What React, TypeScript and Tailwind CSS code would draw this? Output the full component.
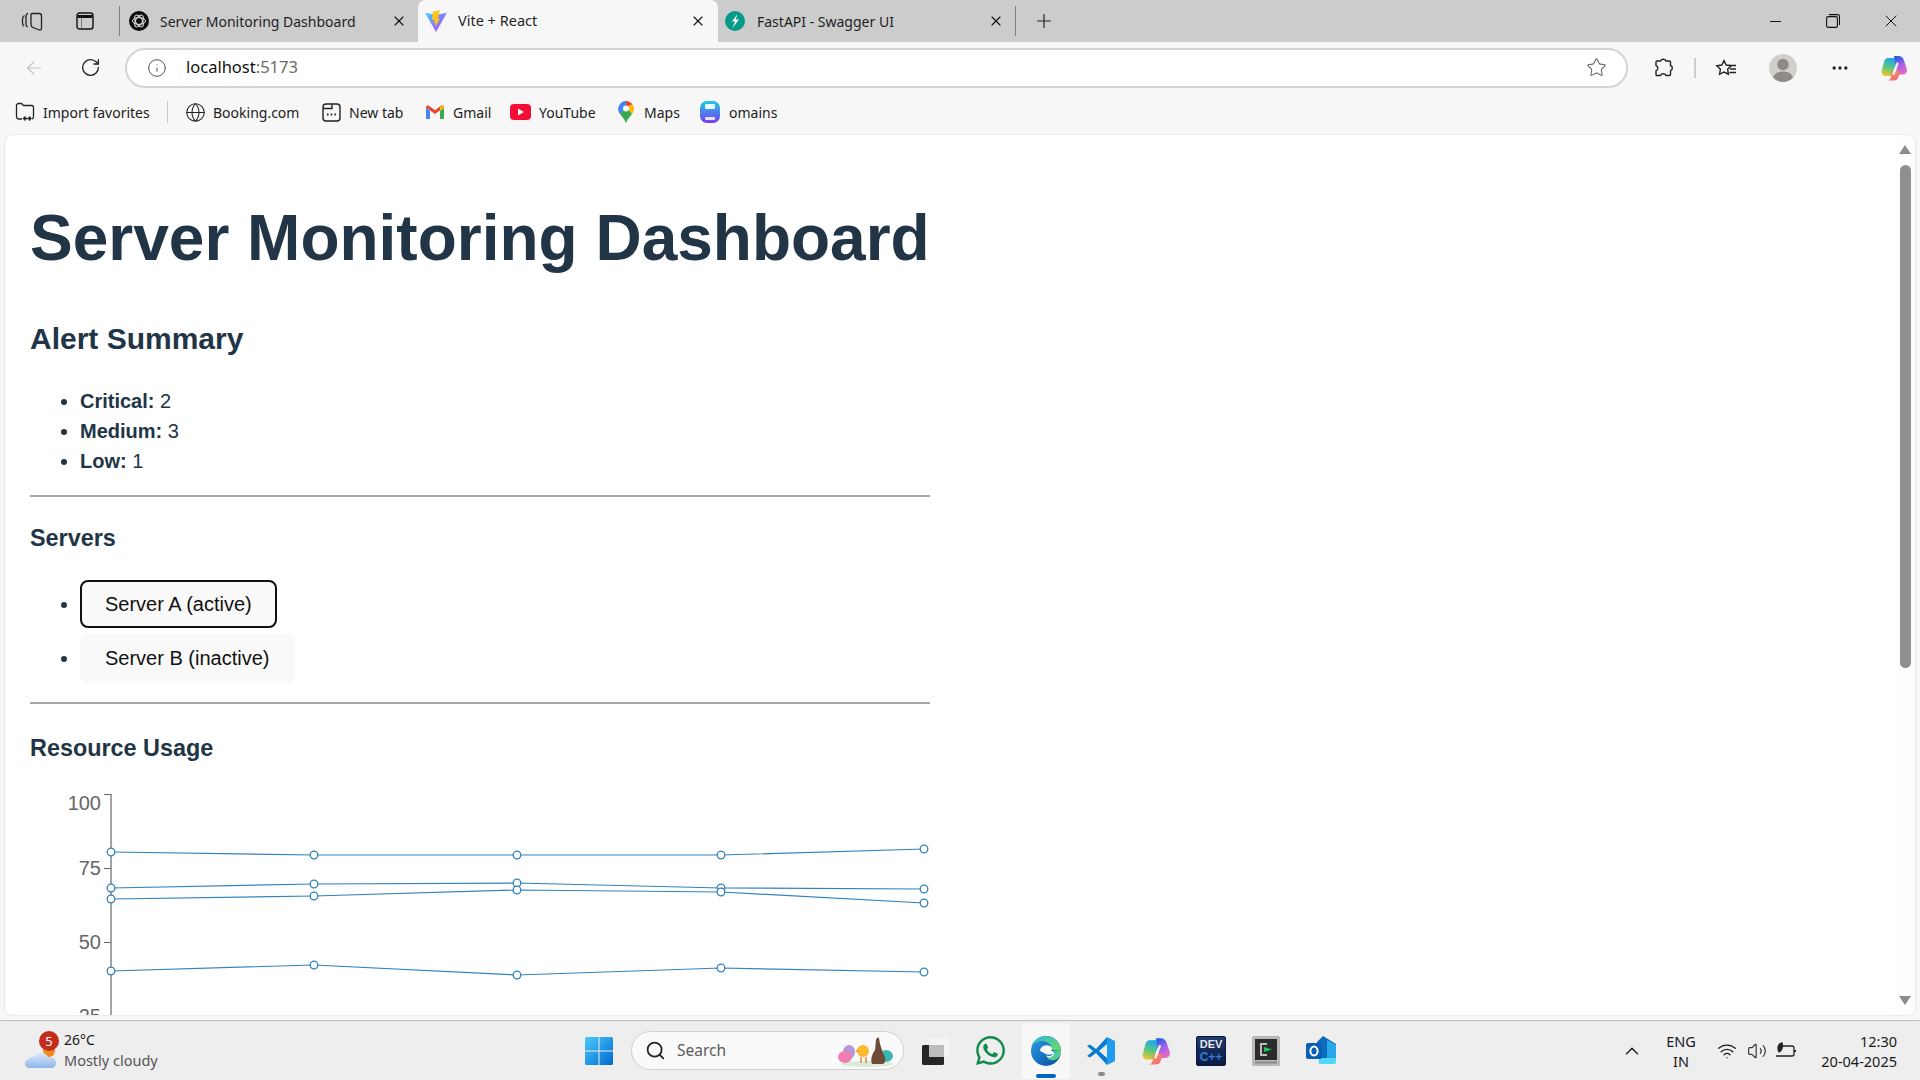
import React from 'react';
import { ArrowLeft, RotateCw, Info, Star, X, Plus, Minus, Search, ChevronUp, Globe, MoreHorizontal, Wifi, Volume2 } from 'lucide-react';
import { FaWhatsapp } from 'react-icons/fa';

const ui = "font-['Noto_Sans','Open_Sans',sans-serif]";

const xs = [111, 314, 517, 721, 924];
const series = [
  [852, 855, 855, 855, 849],
  [888, 884, 883, 888, 889],
  [899, 896, 890, 892, 903],
  [971, 965, 975, 968, 972],
];

function ResourceChart() {
  return (
    <svg width="900" height="300" className="mt-[18px] block shrink-0">
      <g transform="translate(-30,-780)" fontFamily="Liberation Sans" fontSize="20" fill="#666">
        <path d="M104 794.500H111V1100M104 868.500H111M104 942.500H111M104 1015.500H111" fill="none" stroke="#666" strokeWidth="1.2" />
        <text x="101" y="810" textAnchor="end">100</text>
        <text x="101" y="875" textAnchor="end">75</text>
        <text x="101" y="949" textAnchor="end">50</text>
        <text x="101" y="1023" textAnchor="end">25</text>
        {series.map((ys, i) => (
          <g key={i}>
            <polyline points={ys.map((y, j) => `${xs[j]},${y}`).join(' ')} fill="none" stroke="#3182bd" strokeWidth="1.2" />
            {ys.map((y, j) => (
              <circle key={j} cx={xs[j]} cy={y} r="3.800" fill="#fff" stroke="#3182bd" strokeWidth="1.300" />
            ))}
          </g>
        ))}
      </g>
    </svg>
  );
}

function ChatGptIcon() {
  return (
    <svg width="20" height="20" viewBox="0 0 20 20" className="shrink-0">
      <circle cx="10" cy="10" r="10" fill="#0d0d0d" />
      <g fill="none" stroke="#e8e8e8" strokeWidth="1">
        <ellipse cx="10" cy="10" rx="6.500" ry="3.400" />
        <ellipse cx="10" cy="10" rx="6.500" ry="3.400" transform="rotate(60 10 10)" />
        <ellipse cx="10" cy="10" rx="6.500" ry="3.400" transform="rotate(120 10 10)" />
      </g>
    </svg>
  );
}

function ViteIcon() {
  return (
    <svg width="24" height="24" viewBox="0 0 22 22" className="shrink-0">
      <defs>
        <linearGradient id="vitePurple" x1="0" y1="0" x2="1" y2="1">
          <stop offset="0" stopColor="#41d1ff" />
          <stop offset="1" stopColor="#bd34fe" />
        </linearGradient>
      </defs>
      <path d="M1 3.500 11 5.300l10-1.800L11 21z" fill="url(#vitePurple)" />
      <path d="M14.500 1 8 2.500 7.500 10l2.200-.4-.6 3.400 1.600-.4-.5 4 4.600-7.600-2.200.4z" fill="#ffc517" />
    </svg>
  );
}

function FastApiIcon() {
  return (
    <svg width="20" height="20" viewBox="0 0 20 20" className="shrink-0">
      <circle cx="10" cy="10" r="10" fill="#079a88" />
      <path d="M12.500 3 7 10.500h3.200L7.500 17l6.500-8.500h-3.300z" fill="#fff" />
    </svg>
  );
}

function TabClose({ className }: { className: string }) {
  return <X className={`w-[16px] h-[16px] text-[#111] ml-auto shrink-0 ${className}`} strokeWidth={1.7} />;
}

function TabBar() {
  return (
    <div className="h-[42px] bg-[#cccccc] flex items-center shrink-0">
      <div className="w-[64px] flex justify-end shrink-0 pr-[21px]">
        <svg width="22" height="22" viewBox="0 0 22 22" fill="none" stroke="#222" strokeWidth="1.300">
          <path d="M3.500 5.500C2 6.500 1.500 7.500 1.500 9v4c0 1.500.5 2.500 1.500 3.200" />
          <path d="M7 3C5.500 4 5 5 5 6.500V14c0 1.500.5 2.500 1.500 3.300" />
          <path d="M11 3.500h7c1.500 0 2.500 1 2.500 2.500v12.500c0 1-1 1.800-2 1.500l-6.500-2.500c-1.200-.5-2-1.500-2-3V5c0-1 .5-1.500 1-1.500z" />
        </svg>
      </div>
      <div className="w-[42px] shrink-0 flex justify-center">
        <svg width="18" height="18" viewBox="0 0 18 18" fill="none" stroke="#111" strokeWidth="1.400">
          <rect x="1" y="1" width="16" height="16" rx="2.500" />
          <path d="M1.500 4.500h15" strokeWidth="3" />
          <path d="M5.500 6v10.500" strokeWidth="0.8" stroke="#666" />
        </svg>
      </div>
      <div className="w-px h-[30px] bg-[#808080] ml-[13px] shrink-0" />
      <div className="w-[298px] h-[42px] flex items-center shrink-0">
        <div className="w-[9px] shrink-0" />
        <ChatGptIcon />
        <span className="ml-[11px] text-[14px] text-[#1f1f1f] whitespace-nowrap">Server Monitoring Dashboard</span>
        <TabClose className="mr-[11px]" />
      </div>
      <div className="w-[300px] h-[42px] flex items-center shrink-0 bg-[#f7f7f7] rounded-t-lg">
        <div className="w-[6px] shrink-0" />
        <ViteIcon />
        <span className="ml-[10px] text-[14.500px] text-[#1f1f1f] whitespace-nowrap">Vite + React</span>
        <TabClose className="mr-[12px]" />
      </div>
      <div className="w-[297px] h-[42px] flex items-center shrink-0">
        <div className="w-[7px] shrink-0" />
        <FastApiIcon />
        <span className="ml-[12px] text-[14px] text-[#1f1f1f] whitespace-nowrap">FastAPI - Swagger UI</span>
        <TabClose className="mr-[11px]" />
      </div>
      <div className="w-px h-[30px] bg-[#808080] shrink-0" />
      <Plus className="w-[22px] h-[22px] ml-[17px] text-[#222]" strokeWidth={1.300} />
      <div className="ml-auto flex items-center">
        <div className="w-[58px] flex justify-center"><Minus className="w-[17px] h-[17px] text-[#111]" strokeWidth={1.500} /></div>
        <div className="w-[58px] flex justify-center">
          <svg width="14" height="14" viewBox="0 0 14 14" fill="none" stroke="#111" strokeWidth="1.100">
            <rect x="0.600" y="2.600" width="10.800" height="10.800" rx="1.500" />
            <path d="M3 .6h8.500a2 2 0 0 1 2 2V11" />
          </svg>
        </div>
        <div className="w-[58px] flex justify-center"><X className="w-[20px] h-[20px] text-[#111]" strokeWidth={1.200} /></div>
      </div>
    </div>
  );
}

function AvatarIcon() {
  return (
    <svg width="28" height="28" viewBox="0 0 28 28">
      <circle cx="14" cy="14" r="14" fill="#d1cfcb" />
      <circle cx="14" cy="10.500" r="5.800" fill="#8e8b87" />
      <path d="M4 23.500c1.500-4 5-6 10-6s8.500 2 10 6A14 14 0 0 1 14 28a14 14 0 0 1-10-4.500z" fill="#8e8b87" />
    </svg>
  );
}

function CopilotIcon({ size = 28, id }: { size?: number; id: string }) {
  return (
    <svg width={size} height={size} viewBox="0 0 28 28">
      <defs>
        <linearGradient id={`${id}A`} x1="0.6" y1="0" x2="0.3" y2="1">
          <stop offset="0" stopColor="#1aa4f0" />
          <stop offset="0.55" stopColor="#5cc87c" />
          <stop offset="1" stopColor="#f5c52e" />
        </linearGradient>
        <linearGradient id={`${id}B`} x1="0.3" y1="0" x2="0.7" y2="1">
          <stop offset="0" stopColor="#1f5fe0" />
          <stop offset="0.5" stopColor="#a860e8" />
          <stop offset="1" stopColor="#ec6cc0" />
        </linearGradient>
        <linearGradient id={`${id}C`} x1="0" y1="0" x2="1" y2="1">
          <stop offset="0" stopColor="#f7a13c" />
          <stop offset="1" stopColor="#ee5f8f" />
        </linearGradient>
      </defs>
      <path d="M8 4h10l-6 18H6c-3 0-5-2.500-4.300-5.500L4 8c.6-2.500 2-4 4-4z" fill={`url(#${id}A)`} />
      <path d="M14 2h4.500c2.500 0 4.500 1.500 5.300 4l3 9c.9 3-1 5.500-4 5.500H17z" fill={`url(#${id}B)`} />
      <path d="M11 17h8c1 0 1.500.5 1 1.500l-1.500 4.500c-.8 2.500-2.500 3.500-5 3.500H7c3 0 4-2.500 4-5z" fill={`url(#${id}C)`} />
      <path d="M17.500 9.500 13.500 20" stroke="#fff" strokeWidth="2.200" strokeLinecap="round" strokeOpacity="0.9" />
    </svg>
  );
}

function Toolbar() {
  return (
    <div className="h-[51px] bg-[#f7f7f7] flex items-center shrink-0">
      <div className="w-[68px] flex justify-center shrink-0"><ArrowLeft className="w-[22px] h-[22px] text-[#c4c4c4]" strokeWidth={1.300} /></div>
      <div className="w-[44px] flex justify-center shrink-0"><RotateCw className="w-[21px] h-[21px] text-[#222]" strokeWidth={1.500} /></div>
      <div className="w-[1503px] h-[40px] ml-[13px] rounded-full bg-white border-2 border-[#d4d4d4] flex items-center shrink-0">
        <Info className="w-[20px] h-[20px] ml-[20px] text-[#555]" strokeWidth={1.200} />
        <span className="ml-[19px] text-[16.500px] text-[#111]">localhost<span className="text-[#6b6b6b]">:5173</span></span>
        <Star className="w-[21px] h-[21px] ml-auto mr-[19px] text-[#666]" strokeWidth={1.200} />
      </div>
      <div className="flex items-center ml-[24px]">
        <svg width="22" height="22" viewBox="0 0 22 22" fill="none" stroke="#222" strokeWidth="1.400">
          <path d="M8.500 4a3 3 0 0 1 5.500 0h3.500a1 1 0 0 1 1 1v3.500a3 3 0 0 1 0 5.500v3.500a1 1 0 0 1-1 1H14a3 3 0 0 0-5.500 0H5a1 1 0 0 1-1-1V14a3 3 0 0 0 0-5.500V5a1 1 0 0 1 1-1z" />
        </svg>
        <div className="w-[2px] h-[20px] bg-[#cfcfcf] ml-[20px]" />
        <svg width="22" height="22" viewBox="0 0 22 22" fill="none" stroke="#222" strokeWidth="1.400" className="ml-[19px]">
          <path d="M9 2.500 11.200 7l5 .7-3.600 3.500.8 5L9 14l-4.400 2.300.8-5L1.800 7.700 6.800 7z" transform="translate(0 1)" />
          <path d="M14 8.500h7M15 12h6M14.500 15.500H21" />
        </svg>
        <div className="ml-[32px]"><AvatarIcon /></div>
        <MoreHorizontal className="w-[20px] h-[20px] ml-[33px] text-[#222]" strokeWidth={2} />
        <div className="ml-[30px]"><CopilotIcon id="copTop" /></div>
      </div>
    </div>
  );
}

function GmailIcon() {
  return (
    <svg width="18" height="14" viewBox="0 0 18 14" className="shrink-0">
      <path d="M0 2.500v10c0 .8.500 1.500 1.300 1.500H4V6z" fill="#4285f4" />
      <path d="M14 6v8h2.700c.8 0 1.300-.7 1.300-1.500v-10z" fill="#34a853" />
      <path d="M0 2.500 9 9l9-6.500C18 .5 16 0 14.800 1L9 5.300 3.200 1C2 0 0 .5 0 2.500z" fill="#ea4335" />
      <path d="M14 2.200V6l4-3C18 .5 15.700 .5 14 2.200z" fill="#fbbc04" />
    </svg>
  );
}

function YoutubeIcon() {
  return (
    <svg width="21" height="16" viewBox="0 0 21 16" className="shrink-0">
      <rect width="21" height="16" rx="4" fill="#f40f36" />
      <path d="M8 4.500v7l6-3.500z" fill="#fff" />
    </svg>
  );
}

function MapsIcon() {
  return (
    <svg width="16" height="22" viewBox="0 0 16 22" className="shrink-0">
      <path d="M8 0a8 8 0 0 0-6 13l6-7z" fill="#4285f4" />
      <path d="M8 0a8 8 0 0 1 6.500 3.500L8 6z" fill="#ea4335" />
      <path d="M14.500 3.500A8 8 0 0 1 14 13L8 6z" fill="#fbbc04" />
      <path d="M2 13c2 2.500 4.500 5 6 9 1.500-4 4-6.500 6-9L8 6z" fill="#34a853" />
      <circle cx="8" cy="7.500" r="3" fill="#fff" />
    </svg>
  );
}

function OmainsIcon() {
  return (
    <svg width="20" height="22" viewBox="0 0 20 22" className="shrink-0">
      <defs>
        <linearGradient id="omainsG" x1="0" y1="0" x2="0" y2="1">
          <stop offset="0" stopColor="#1ec8e8" />
          <stop offset="1" stopColor="#7a3cf0" />
        </linearGradient>
      </defs>
      <rect width="20" height="22" rx="7" fill="url(#omainsG)" />
      <rect x="5" y="3" width="10" height="5" rx="1" fill="#e8fbff" />
      <rect x="5" y="16" width="10" height="3" rx="1" fill="#e8e0ff" />
    </svg>
  );
}

function Bookmark({ icon, label, slot, gap }: { icon: React.ReactNode; label: string; slot: string; gap: string }) {
  return (
    <div className={`flex items-center shrink-0 ${slot}`}>
      <div className="w-[22px] flex justify-center shrink-0">{icon}</div>
      <span className={`${gap} text-[14px] text-[#1c1c1c] whitespace-nowrap`}>{label}</span>
    </div>
  );
}

function Bookmarks() {
  return (
    <div className="h-[42px] bg-[#f7f7f7] flex items-center pl-[14px] pb-[4px] shrink-0">
      <Bookmark
        slot="w-[142px]"
        gap="ml-[7px]"
        label="Import favorites"
        icon={
          <svg width="20" height="20" viewBox="0 0 20 20" fill="none" stroke="#222" strokeWidth="1.300">
            <path d="M7 17H4a2.500 2.500 0 0 1-2.500-2.500V3.500A2 2 0 0 1 3.500 1.500h3l2 2h8a2 2 0 0 1 2 2v9A2.500 2.500 0 0 1 17 17" />
            <path d="M9 16.500h6.500M10.500 14.500l-2 2 2 2M14 14.500l2 2-2 2" />
          </svg>
        }
      />
      <div className="w-px h-[22px] bg-[#c8c8c8] ml-[11px] mr-[16px] shrink-0" />
      <Bookmark slot="w-[136px]" gap="ml-[7px]" label="Booking.com" icon={<Globe className="w-[21px] h-[21px] text-[#222]" strokeWidth={1.200} />} />
      <Bookmark
        slot="w-[104px]"
        gap="ml-[7px]"
        label="New tab"
        icon={
          <svg width="19" height="19" viewBox="0 0 19 19" fill="none" stroke="#222" strokeWidth="1.400">
            <rect x="1" y="1" width="17" height="17" rx="3" />
            <path d="M1 5.500h9v-4" />
            <path d="M5 11.500h1.500M8.700 11.500h1.500M12.400 11.500h1.500" strokeWidth="2" />
          </svg>
        }
      />
      <Bookmark slot="w-[85px]" gap="ml-[7px]" label="Gmail" icon={<GmailIcon />} />
      <Bookmark slot="w-[106px]" gap="ml-[8px]" label="YouTube" icon={<YoutubeIcon />} />
      <Bookmark slot="w-[84px]" gap="ml-[7px]" label="Maps" icon={<MapsIcon />} />
      <Bookmark slot="w-[80px]" gap="ml-[8px]" label="omains" icon={<OmainsIcon />} />
    </div>
  );
}

function Scrollbar() {
  return (
    <div className="w-[20px] bg-[#fdfdfd] flex flex-col items-center shrink-0">
      <div className="w-0 h-0 border-x-[6px] border-x-transparent border-b-[9px] border-b-[#8c8c8c] mt-[10px]" />
      <div className="w-[11px] h-[503px] bg-[#8f8f8f] rounded-full mt-[11px]" />
      <div className="w-0 h-0 border-x-[6px] border-x-transparent border-t-[9px] border-t-[#8c8c8c] mt-auto mb-[10px]" />
    </div>
  );
}

function Page() {
  return (
    <div className="flex-1 mx-[5px] mb-[5px] bg-white rounded-lg shadow-[0_0_2px_rgba(0,0,0,0.18)] flex overflow-hidden">
      <div className="flex-1 pl-[25px] overflow-hidden text-[20px] leading-[30px] text-[#213547] font-['Liberation_Sans',Arial,sans-serif]">
        <div className="w-[900px] pt-[68px]">
          <h1 className="text-[64px] leading-[70px] h-[70px] font-bold whitespace-nowrap">Server Monitoring Dashboard</h1>
          <h2 className="mt-[48px] h-[36px] text-[30px] leading-[36px] font-bold">Alert Summary</h2>
          <ul className="mt-[29px] pl-[50px] list-disc">
            <li><strong>Critical:</strong> 2</li>
            <li><strong>Medium:</strong> 3</li>
            <li><strong>Low:</strong> 1</li>
          </ul>
          <hr className="mt-[19px] border-t-2 border-[#a6a6a6]" />
          <h3 className="mt-[27px] h-[28px] text-[23.400px] leading-[28px] font-bold">Servers</h3>
          <ul className="mt-[28px] pl-[50px] list-disc">
            <li>
              <button className="h-[48px] px-[23px] rounded-lg bg-[#f9f9f9] border-2 border-[#111] text-[20px] text-[#111] font-medium">Server A (active)</button>
            </li>
            <li className="mt-[6px]">
              <button className="h-[49px] px-[25px] pb-[1px] rounded-lg bg-[#f9f9f9] text-[20px] text-[#111] font-medium">Server B (inactive)</button>
            </li>
          </ul>
          <hr className="mt-[19px] border-t-2 border-[#a6a6a6]" />
          <h3 className="mt-[30px] h-[28px] text-[23.400px] leading-[28px] font-bold">Resource Usage</h3>
          <ResourceChart />
        </div>
      </div>
      <Scrollbar />
    </div>
  );
}

function WeatherIcon() {
  return (
    <div className="relative w-[36px] h-[40px] shrink-0">
      <svg width="32" height="24" viewBox="0 0 32 24" className="absolute left-0 bottom-[2px]">
        <defs>
          <linearGradient id="cloudG" x1="0" y1="0" x2="0" y2="1">
            <stop offset="0" stopColor="#dbe8fb" />
            <stop offset="1" stopColor="#8fb6ea" />
          </linearGradient>
        </defs>
        <circle cx="24" cy="6" r="6" fill="#f08a1c" />
        <path d="M5 23a4.500 4.500 0 0 1-1-9c1-2 3-2.500 5-2 1.500-5 11-6 14 0 5 0 8 2 8 6 0 3-2 5-5 5z" fill="url(#cloudG)" />
      </svg>
      <span className="absolute left-[14px] top-0 w-[20px] h-[20px] rounded-full bg-[#c42b1c] text-white text-[13px] leading-[20px] text-center">5</span>
    </div>
  );
}

function WindowsIcon() {
  return (
    <svg width="30" height="30" viewBox="0 0 30 30" className="shrink-0">
      <defs>
        <linearGradient id="winG" x1="0" y1="0" x2="1" y2="1">
          <stop offset="0" stopColor="#4cc9fb" />
          <stop offset="1" stopColor="#0069cf" />
        </linearGradient>
      </defs>
      <path d="M1 2.500A1.500 1.500 0 0 1 2.500 1h12v13.500H1zM15.500 1h12A1.500 1.500 0 0 1 29 2.500v12H15.500zM1 15.500h13.500V29h-12A1.500 1.500 0 0 1 1 27.500zM15.500 15.500H29v12a1.500 1.500 0 0 1-1.500 1.500h-12z" fill="url(#winG)" />
    </svg>
  );
}

function EasterIcon() {
  return (
    <svg width="60" height="32" viewBox="0 0 60 32" className="shrink-0">
      <ellipse cx="30" cy="29" rx="26" ry="3" fill="#d9ecdc" />
      <ellipse cx="12" cy="17" rx="6" ry="7" fill="#b596d6" />
      <ellipse cx="8" cy="22" rx="7" ry="6" fill="#ee7fb0" />
      <ellipse cx="49" cy="21" rx="7" ry="6" fill="#3db8ae" />
      <circle cx="26" cy="16" r="6" fill="#fbb92e" />
      <path d="M21 15l-3 1 3 1z" fill="#e8721c" />
      <path d="M24 22v6M29 22v6" stroke="#e8721c" strokeWidth="1.300" />
      <path d="M35 29c-2-6 1-11 3-14l1-10c0-2 3-3 3-2l1 6 3 9c3 5 3 9 0 11z" fill="#6f4a36" />
    </svg>
  );
}

function EdgeIcon() {
  return (
    <svg width="32" height="32" viewBox="0 0 32 32">
      <defs>
        <linearGradient id="edgeA" x1="0" y1="0" x2="1" y2="1">
          <stop offset="0" stopColor="#2fb5e0" />
          <stop offset="1" stopColor="#6be05a" />
        </linearGradient>
        <linearGradient id="edgeB" x1="0" y1="0" x2="1" y2="1">
          <stop offset="0" stopColor="#2a9ee6" />
          <stop offset="1" stopColor="#0a4c9e" />
        </linearGradient>
      </defs>
      <circle cx="16" cy="16" r="15" fill="url(#edgeB)" />
      <path d="M16 1C9 1 3.500 5 1.500 11c4-5 11-6 15-4 4 1.500 5.500 5 5 8l9.500 1C31 8 24 1 16 1z" fill="url(#edgeA)" />
      <path d="M10 15c1-4 6-6 10-4 2 1 2.500 4 1 5l10 0c0 2-1 4-2 5.500-4 4-11 3-13-1 3 1 6 .5 7-1.500-3 1-7 1-9-1-1.500-1-4-1.500-4-3z" fill="#f8f8f8" />
      <path d="M21.500 16H31c0 3-1.500 6-4 8-3.500 2-8 1.500-10-1.500 3 .5 6-.5 7-3 .4-1.500-1-3.500-2.500-3.500z" fill="url(#edgeA)" />
    </svg>
  );
}

function VsCodeIcon() {
  return (
    <svg width="30" height="30" viewBox="0 0 30 30">
      <path d="M21 1 29 5v20l-8 4z" fill="#1f9cf0" />
      <path d="M21 1 10 13 4 8.500 1 10l6 5-6 5 3 1.500L10 17l11 12 0-7-8-7 8-7z" fill="#0b7ad1" />
    </svg>
  );
}

function DevCppIcon() {
  return (
    <div className="w-[30px] h-[30px] rounded-[2px] bg-gradient-to-b from-[#1d3a6e] to-[#0b1a44] border border-[#0a1738] flex flex-col items-center justify-center font-['Liberation_Sans',sans-serif] font-bold leading-[13px] shrink-0">
      <span className="text-[11px] text-[#e6e6e6]">DEV</span>
      <span className="text-[12px] text-[#2f7fd6]">C++</span>
    </div>
  );
}

function TerminalIcon() {
  return (
    <svg width="28" height="30" viewBox="0 0 28 30">
      <rect width="28" height="30" rx="1.500" fill="#b8b8b8" />
      <rect x="3" y="3" width="22" height="21" fill="#2c2c2c" />
      <path d="M8 7h2v13H8zM10 7h5v2h-5zM10 18h5v2h-5z" fill="#bdbdbd" />
      <path d="M12 11l8 2.500-8 2.500z" fill="#22c55e" />
      <rect x="3" y="25.500" width="22" height="2" fill="#8a8a8a" />
    </svg>
  );
}

function OutlookIcon() {
  return (
    <svg width="32" height="30" viewBox="0 0 32 30">
      <path d="M18 0l13 8v14H12V6z" fill="#0f6cbd" />
      <path d="M22 4l9 5v13h-9z" fill="#28a8ea" />
      <path d="M14 22h17v4a2 2 0 0 1-2 2H14z" fill="#50d9ff" />
      <rect x="1" y="7" width="16" height="16" rx="2" fill="#0a5fb4" />
      <ellipse cx="9" cy="15" rx="3.600" ry="4.500" fill="none" stroke="#fff" strokeWidth="2" />
    </svg>
  );
}

function Taskbar() {
  return (
    <div className="h-[60px] bg-[#eeeeee] border-t border-[#bdbdbd] flex items-center shrink-0">
      <div className="flex items-center pl-[25px] w-[584px] shrink-0">
        <WeatherIcon />
        <div className="ml-[3px] -mt-[1px]">
          <div className="text-[14px] leading-[20px] text-[#1a1a1a]">26°C</div>
          <div className="text-[14.500px] leading-[20px] text-[#555]">Mostly cloudy</div>
        </div>
      </div>
      <WindowsIcon />
      <div className="w-[273px] h-[39px] ml-[17px] bg-[#fafafa] rounded-full border border-[#d0d0d0] flex items-center shrink-0">
        <Search className="w-[21px] h-[21px] ml-[13px] text-[#222]" strokeWidth={2} />
        <span className="ml-[11px] text-[15.500px] text-[#5c5c5c]">Search</span>
        <div className="ml-auto mr-[6px]"><EasterIcon /></div>
      </div>
      <div className="w-[55px] flex justify-center shrink-0 ml-[3px]">
        <svg width="30" height="30" viewBox="0 0 30 30">
          <rect x="2" y="9" width="22" height="20" rx="1.500" fill="#262626" />
          <rect x="9" y="2" width="20" height="19" rx="1" fill="#f4f4f4" />
          <rect x="9" y="9" width="15" height="12" fill="#bdbdbd" />
        </svg>
      </div>
      <div className="w-[57px] flex justify-center shrink-0"><FaWhatsapp className="w-[33px] h-[33px] text-[#128c4b]" /></div>
      <div className="w-[48px] h-[56px] ml-[3px] flex flex-col items-center justify-center bg-[#f8f8f8] rounded relative shrink-0">
        <EdgeIcon />
        <div className="absolute bottom-[1px] w-[20px] h-[4px] rounded bg-[#0067c0]" />
      </div>
      <div className="w-[62px] flex justify-center shrink-0 relative">
        <VsCodeIcon />
        <div className="absolute -bottom-[10px] w-[7px] h-[4px] rounded bg-[#8a8a8a]" />
      </div>
      <div className="w-[48px] flex justify-center shrink-0"><CopilotIcon id="copBar" size={30} /></div>
      <div className="w-[62px] flex justify-center shrink-0"><DevCppIcon /></div>
      <div className="w-[48px] flex justify-center shrink-0"><TerminalIcon /></div>
      <div className="w-[62px] flex justify-center shrink-0"><OutlookIcon /></div>
      <div className="ml-auto flex items-center">
        <ChevronUp className="w-[22px] h-[22px] text-[#222]" strokeWidth={1.600} />
        <div className="w-[60px] ml-[8px] text-center text-[14.500px] leading-[20px] text-[#1a1a1a]">ENG<br />IN</div>
        <Wifi className="w-[20px] h-[20px] ml-[6px] text-[#222]" strokeWidth={1.600} />
        <Volume2 className="w-[20px] h-[20px] ml-[10px] text-[#333]" strokeWidth={1.400} />
        <svg width="22" height="18" viewBox="0 0 22 18" fill="none" stroke="#222" strokeWidth="1.300" className="ml-[8px]">
          <path d="M7 4h10a2 2 0 0 1 2 2v6a2 2 0 0 1-2 2H1" />
          <path d="M20 8v2" strokeWidth="2" />
          <path d="M7 1C3 2 2 6 4 10c3-1 4-5 3-9z" fill="#222" />
        </svg>
        <div className="w-[100px] text-right mr-[23px] text-[14.500px] leading-[20px] text-[#1a1a1a]">12:30<br />20-04-2025</div>
      </div>
    </div>
  );
}

export default function App() {
  return (
    <div className={`w-[1920px] h-[1080px] bg-[#f7f7f7] flex flex-col overflow-hidden ${ui}`}>
      <TabBar />
      <Toolbar />
      <Bookmarks />
      <Page />
      <Taskbar />
    </div>
  );
}
